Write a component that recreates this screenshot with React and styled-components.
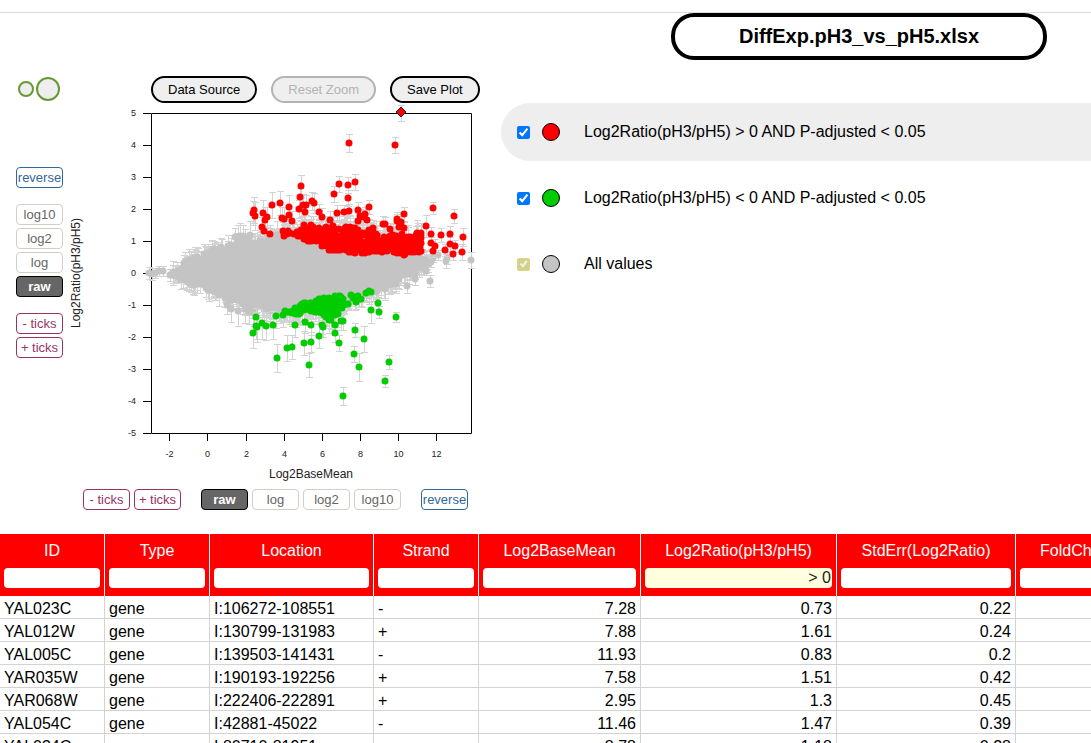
import React from "react";
import styled, { createGlobalStyle } from "styled-components";

const GlobalStyle = createGlobalStyle`
  *, *::before, *::after { box-sizing: border-box; }
  body {
    margin: 0;
    background: #fff;
    color: #000;
    font-family: Arial, "Liberation Sans", sans-serif;
    font-size: 16px;
  }
  button, input { font-family: inherit; }
`;

const Page = styled.div`
  display: flex;
  flex-direction: column;
  height: 100vh;
  overflow: hidden;
`;

const TopRule = styled.div`
  flex: none;
  height: 13px;
  border-bottom: 1px solid #ddd;
`;

const Workspace = styled.main`
  flex: none;
  display: flex;
`;

const PlotPanel = styled.section`
  flex: none;
  display: flex;
  gap: 3px;
  padding: 63px 20px 24px 16px;
`;

const ScaleColumn = styled.div`
  display: flex;
  flex-direction: column;
  gap: 16px;
`;

const SizeButton = styled.button`
  display: block;
  width: 47px;
  height: 26px;
  margin-bottom: 49px;
  padding: 0;
  border: 0;
  background: none;
`;

const ScaleGroup = styled.div`
  display: flex;
  flex-direction: ${(p) => (p.$row ? "row" : "column")};
  gap: ${(p) => (p.$row ? "4px" : "3px")};
`;

const tones = {
  reverse: "color: #369; border-color: #369; background: #fff;",
  ticks: "color: #936; border-color: #936; background: #fff;",
  plain: "color: #666; border-color: #d3cec6; background: #fff;",
  active: "color: #fff; border-color: #000; background: #666; font-weight: bold;",
};

const ScaleButton = styled.button`
  width: 47px;
  height: 21px;
  padding: 0;
  border: 1px solid;
  border-radius: 4px;
  font-size: 13px;
  line-height: 19px;
  white-space: nowrap;
  ${(p) => tones[p.$tone]}
`;

const PlotColumn = styled.div`
  display: flex;
  flex-direction: column;
`;

const Toolbar = styled.div`
  display: flex;
  gap: 14px;
  margin: 0 0 1px 85px;
`;

const ToolButton = styled.button`
  height: 27px;
  padding: 0 15px;
  border: 2px solid #000;
  border-radius: 14px;
  background: #efefef;
  color: #000;
  font-size: 13px;
  white-space: nowrap;
  &:disabled {
    border-color: #b3b3b3;
    color: #b3b3b3;
  }
`;

const Chart = styled.svg`
  display: block;
  width: 415px;
  height: 380px;
`;

const TickLabel = styled.text`
  font-size: 9px;
  fill: #222;
`;

const AxisTitle = styled.text`
  font-size: 12px;
  fill: #222;
  text-anchor: middle;
`;

const XControls = styled.div`
  display: flex;
  gap: 20px;
  margin: 5px 0 0 17px;
`;

const LegendPanel = styled.section`
  flex: 1;
  min-width: 0;
`;

const Title = styled.h1`
  width: 376px;
  margin: 0 0 43px 170px;
  padding: 8px 0;
  border: 4px solid #000;
  border-radius: 23px;
  font-size: 20px;
  line-height: 23px;
  text-align: center;
`;

const Legend = styled.div`
  display: flex;
  flex-direction: column;
  gap: 8px;
`;

const LegendRow = styled.label`
  display: flex;
  align-items: center;
  height: 58px;
  padding-left: 16px;
  border-radius: 29px 0 0 29px;
  background: ${(p) => (p.$selected ? "#eee" : "transparent")};
  white-space: nowrap;
`;

const Check = styled.input`
  flex: none;
  width: 13px;
  height: 13px;
  margin: 0 12px 0 0;
  &:disabled {
    appearance: none;
    display: grid;
    place-items: center;
    border: 1px solid #dcd97a;
    border-radius: 2px;
    background: #d3d18f;
  }
  &:disabled::before {
    content: "";
    width: 9px;
    height: 8px;
    background: #f4f3e2;
    clip-path: polygon(8% 50%, 24% 36%, 40% 56%, 78% 4%, 96% 18%, 44% 96%);
  }
`;

const Swatch = styled.span`
  flex: none;
  width: 18px;
  height: 18px;
  margin-right: 24px;
  border: 1px solid #000;
  border-radius: 50%;
  background: ${(p) => p.$color};
`;

const TableWrap = styled.div`
  flex: 1;
  min-height: 0;
  overflow: hidden;
`;

const Table = styled.table`
  table-layout: fixed;
  width: 1226px;
  border-collapse: separate;
  border-spacing: 0;
`;

const Col = styled.col`
  width: ${(p) => p.$width}px;
`;

const HeadCell = styled.th`
  height: 62px;
  padding: 7px 4px 8px;
  border-right: 1px solid #fff;
  background: #f00;
  color: #fff;
  font-weight: normal;
  line-height: 20px;
  vertical-align: top;
`;

const FilterInput = styled.input`
  display: block;
  width: 100%;
  height: 20px;
  margin-top: 7px;
  padding: 0 1px;
  border: 0;
  border-radius: 4px;
  background: ${(p) => (p.$filled ? "#ffffe0" : "#fff")};
  color: #222;
  font-size: 16px;
  line-height: 20px;
  text-align: ${(p) => (p.$numeric ? "right" : "left")};
`;

const Cell = styled.td`
  height: 23px;
  padding: 4px 4px 0;
  border-right: 1px solid #d3d3d3;
  border-bottom: 1px solid #d3d3d3;
  line-height: 18px;
  white-space: nowrap;
  text-align: ${(p) => (p.$numeric ? "right" : "left")};
`;

/* ---------- scatter plot ---------- */

const GREY = "#c4c4c4";
const RED = "#f00";
const GREEN = "#0c0";

function makeRandom(seed) {
  let a = seed;
  return () => {
    a = (a + 0x6d2b79f5) | 0;
    let t = Math.imul(a ^ (a >>> 15), 1 | a);
    t = (t + Math.imul(t ^ (t >>> 7), 61 | t)) ^ t;
    return ((t ^ (t >>> 14)) >>> 0) / 4294967296;
  };
}

function edgeAt(edge, x) {
  for (let i = 1; i < edge.length; i++) {
    const [x0, y0] = edge[i - 1];
    const [x1, y1] = edge[i];
    if (x <= x1) return y0 + ((y1 - y0) * (x - x0)) / (x1 - x0);
  }
  return edge[edge.length - 1][1];
}

function cloud(top, bottom, count, seed) {
  const random = makeRandom(seed);
  const left = top[0][0];
  const right = top[top.length - 1][0];
  const heights = [];
  let total = 0;
  for (let x = left; x <= right; x++) {
    total += Math.max(1, edgeAt(bottom, x) - edgeAt(top, x));
    heights.push(total);
  }
  return Array.from({ length: count }, () => {
    const pick = random() * total;
    const x = left + heights.findIndex((h) => h >= pick);
    const t = edgeAt(top, x);
    const b = edgeAt(bottom, x);
    return [x, Math.round(t + (b - t) * random())];
  });
}

const dots = (points) => points.map(([x, y]) => `M${x} ${y}h.01`).join("");

function bars(points, seed, low, spread) {
  const random = makeRandom(seed);
  return points
    .map(([x, y, size]) => {
      const h = size || Math.round(low + random() * spread);
      return `M${x - 3} ${y - h + 0.5}h7M${x + 0.5} ${y - h}v${2 * h}M${x - 3} ${y + h + 0.5}h7`;
    })
    .join("");
}

const greyTop = [[173, 272], [178, 267], [187, 262], [200, 256], [215, 249], [225, 247], [240, 243], [262, 240], [280, 236], [300, 234], [360, 236], [400, 248], [420, 258], [428, 262]];
const greyBottom = [[173, 276], [178, 278], [187, 282], [200, 287], [215, 292], [225, 298], [240, 302], [255, 307], [275, 311], [310, 313], [340, 305], [360, 298], [380, 292], [395, 281], [408, 274], [420, 266], [428, 263]];
const shift = (edge, dy) => edge.map(([x, y]) => [x, y + dy]);
const rimTop = cloud(shift(greyTop, -1), shift(greyTop, 4), 200, 11);
const rimBottom = cloud(shift(greyBottom, -4), shift(greyBottom, 1), 200, 29);
const greyFew = [
  [149, 273, 6], [152, 274, 6], [155, 273, 5], [159, 271, 5], [163, 271, 5], [170, 275, 6], [227, 305, 9], [231, 309, 13], [238, 311, 15], [245, 309, 14], [249, 312, 12], [254, 312, 14],
  [235, 237, 9], [240, 236, 13], [250, 235, 14], [262, 239, 11], [277, 235, 14], [245, 238, 9], [238, 238, 13], [243, 236, 11],
  [396, 284, 9], [407, 286, 7], [430, 281, 6], [415, 279, 6], [426, 271, 4], [421, 268, 6], [431, 262, 5], [426, 264, 5],
  [438, 255, 5], [446, 261, 7], [447, 258, 6], [471, 260, 8], [415, 274, 5], [433, 258, 4],
];
const greyOutline = [...greyTop, ...[...greyBottom].reverse()].map((p) => p.join(",")).join(" ");

const redTop = [[283, 233], [298, 232], [302, 227], [315, 226], [322, 229], [330, 224], [340, 228], [353, 226], [362, 231], [373, 230], [379, 237], [388, 236], [398, 234], [408, 233], [414, 230], [421, 233]];
const redBottom = [[283, 234], [297, 236], [303, 240], [320, 245], [328, 250], [343, 252], [360, 254], [373, 252], [382, 253], [395, 253], [402, 256], [411, 253], [421, 253]];
const redFew = [
  [301, 186, 11], [300, 197, 9], [299, 209, 9], [303, 205, 11], [306, 205, 10], [305, 212, 9], [312, 201, 9], [314, 203, 10], [319, 212, 8], [254, 210, 13],
  [253, 213, 12], [255, 216, 14], [263, 213, 13], [267, 217, 10], [265, 220, 13], [262, 227, 10], [264, 231, 9], [270, 234, 9], [272, 205, 13], [280, 203, 12],
  [289, 207, 12], [289, 215, 9], [282, 218, 11], [284, 219, 12], [292, 221, 10], [349, 143, 9], [395, 145, 8], [339, 184, 8], [348, 185, 8], [355, 182, 8],
  [334, 194, 8], [348, 198, 8], [322, 217, 9], [337, 213, 8], [344, 212, 7], [349, 211, 7], [358, 210, 8], [369, 207, 7], [365, 214, 7], [360, 216, 7],
  [363, 217, 7], [367, 220, 7], [358, 221, 8], [330, 220, 9], [383, 224, 8], [385, 224, 7], [390, 229, 6], [404, 214, 7], [397, 219, 7], [397, 221, 7],
  [401, 222, 6], [399, 227, 6], [404, 228, 6], [433, 208, 6], [454, 216, 7], [426, 226, 11], [431, 234, 7], [441, 235, 7], [450, 234, 8], [463, 237, 9],
  [431, 243, 6], [435, 246, 7], [433, 251, 6], [445, 250, 6], [450, 244, 7], [455, 246, 6], [453, 254, 6], [462, 252, 8],
  [283, 231, 9], [288, 231, 8], [284, 236, 8], [373, 228, 8], [304, 225, 10], [311, 225, 9],
];

const greenTop = [[276, 312], [283, 311], [290, 310], [298, 306], [305, 302], [315, 300], [320, 298], [333, 296], [341, 295], [344, 299]];
const greenBottom = [[276, 313], [290, 312], [295, 316], [305, 311], [315, 313], [322, 314], [328, 321], [335, 322], [340, 311], [344, 305]];
const greenFew = [
  [256, 317, 9], [262, 323, 16], [256, 326, 13], [257, 327, 15], [266, 326, 14], [273, 325, 14], [253, 333, 15], [295, 325, 12], [305, 322, 11], [311, 325, 10],
  [287, 348, 13], [292, 347, 12], [304, 343, 12], [311, 342, 10], [277, 358, 14], [309, 365, 12], [319, 336, 12], [335, 333, 9], [339, 343, 8], [355, 330, 7],
  [364, 339, 13], [354, 354, 8], [359, 367, 14], [389, 362, 7], [385, 381, 6], [343, 396, 9], [396, 317, 5], [379, 312, 6], [371, 310, 13], [378, 303, 6],
  [371, 292, 4], [369, 291, 4], [366, 293, 4], [348, 304, 6], [351, 295, 5], [353, 298, 5], [355, 297, 5], [358, 296, 6], [361, 299, 7], [356, 302, 7],
  [341, 321, 9], [343, 321, 9], [322, 325, 9], [323, 327, 10], [335, 325, 9], [276, 316, 12], [283, 315, 12],
];

const redCloud = cloud(redTop, redBottom, 420, 5);
const greenCloud = cloud(greenTop, greenBottom, 160, 17);

const xTicks = [[-2, 169], [0, 207], [2, 246], [4, 284], [6, 322], [8, 360], [10, 398], [12, 436]];
const yTicks = [5, 4, 3, 2, 1, 0, -1, -2, -3, -4, -5];

function ScatterPlot() {
  const frame = [
    "M151.5 433.5V113.5H471.5V433.5H151.5",
    ...xTicks.map(([, x]) => `M${x + 0.5} 433v8`),
    ...yTicks.map((v) => `M143 ${273.5 - 32 * v}h8`),
  ].join("");
  return (
    <Chart viewBox="66 104 415 380" role="img" aria-label="Log2Ratio(pH3/pH5) against Log2BaseMean">
      <path d={frame} fill="none" stroke="#000" />
      {xTicks.map(([v, x]) => (
        <TickLabel key={v} x={x + 0.5} y="457" textAnchor="middle">{v}</TickLabel>
      ))}
      {yTicks.map((v) => (
        <TickLabel key={v} x="136" y={276 - 32 * v} textAnchor="end">{v}</TickLabel>
      ))}
      <AxisTitle x="311" y="478">Log2BaseMean</AxisTitle>
      <AxisTitle transform="translate(80 273) rotate(-90)">Log2Ratio(pH3/pH5)</AxisTitle>
      <g fill="none" stroke="#d3d3d3">
        <path d={bars(rimTop, 3, 6, 5)} />
        <path d={bars(rimBottom, 7, 6, 5)} />
        <path d={bars(greyFew, 9, 6, 5)} />
      </g>
      <g fill="none" stroke={GREY} strokeWidth="7" strokeLinecap="round">
        <path d={dots(rimTop)} />
        <path d={dots(rimBottom)} />
        <path d={dots(greyFew)} />
      </g>
      <g fill="none" stroke="#d3d3d3">
        <path d={bars(redCloud.filter(([x, y]) => y < edgeAt(redTop, x) + 5), 13, 7, 6)} />
        <path d={bars(greenCloud.filter(([x, y]) => y > edgeAt(greenBottom, x) - 4), 21, 7, 7)} />
        <path d={bars(redFew, 1, 8, 4)} />
        <path d={bars(greenFew, 2, 8, 4)} />
        <path d="M398 105.5h7M401.5 105v16M398 121.5h7" />
      </g>
      <polygon points={greyOutline} fill={GREY} />
      <path d={dots([...redCloud, ...redFew])} stroke={RED} strokeWidth="7" strokeLinecap="round" />
      <path d={dots([...greenCloud, ...greenFew])} stroke={GREEN} strokeWidth="7" strokeLinecap="round" />
      <path d="M401 107l5 5-5 5-5-5z" fill={RED} stroke="#222" />
    </Chart>
  );
}

/* ---------- data ---------- */

const columns = [
  { name: "ID", width: 105 },
  { name: "Type", width: 105 },
  { name: "Location", width: 164 },
  { name: "Strand", width: 105 },
  { name: "Log2BaseMean", width: 162, numeric: true },
  { name: "Log2Ratio(pH3/pH5)", width: 196, numeric: true, filter: "> 0" },
  { name: "StdErr(Log2Ratio)", width: 179, numeric: true },
  { name: "FoldChange(pH3/pH5)", width: 210, numeric: true },
];

const rows = [
  ["YAL023C", "gene", "I:106272-108551", "-", "7.28", "0.73", "0.22", "1.66"],
  ["YAL012W", "gene", "I:130799-131983", "+", "7.88", "1.61", "0.24", "3.05"],
  ["YAL005C", "gene", "I:139503-141431", "-", "11.93", "0.83", "0.2", "1.78"],
  ["YAR035W", "gene", "I:190193-192256", "+", "7.58", "1.51", "0.42", "2.85"],
  ["YAR068W", "gene", "I:222406-222891", "+", "2.95", "1.3", "0.45", "2.46"],
  ["YAL054C", "gene", "I:42881-45022", "-", "11.46", "1.47", "0.39", "2.77"],
  ["YAL034C", "gene", "I:80710-81951", "-", "8.78", "1.18", "0.28", "2.27"],
];

const legend = [
  { text: "Log2Ratio(pH3/pH5) > 0 AND P-adjusted < 0.05", color: RED, selected: true },
  { text: "Log2Ratio(pH3/pH5) < 0 AND P-adjusted < 0.05", color: GREEN },
  { text: "All values", color: GREY, disabled: true },
];

export default function App() {
  return (
    <Page>
      <GlobalStyle />
      <TopRule />
      <Workspace>
        <PlotPanel>
          <ScaleColumn>
            <SizeButton aria-label="Point size">
              <svg width="47" height="26" fill="#eee" stroke="#693" strokeWidth="2">
                <circle cx="10" cy="13" r="7" />
                <circle cx="32" cy="13" r="11" />
              </svg>
            </SizeButton>
            <ScaleButton $tone="reverse">reverse</ScaleButton>
            <ScaleGroup>
              <ScaleButton $tone="plain">log10</ScaleButton>
              <ScaleButton $tone="plain">log2</ScaleButton>
              <ScaleButton $tone="plain">log</ScaleButton>
              <ScaleButton $tone="active">raw</ScaleButton>
            </ScaleGroup>
            <ScaleGroup>
              <ScaleButton $tone="ticks">- ticks</ScaleButton>
              <ScaleButton $tone="ticks">+ ticks</ScaleButton>
            </ScaleGroup>
          </ScaleColumn>
          <PlotColumn>
            <Toolbar>
              <ToolButton>Data Source</ToolButton>
              <ToolButton disabled>Reset Zoom</ToolButton>
              <ToolButton>Save Plot</ToolButton>
            </Toolbar>
            <ScatterPlot />
            <XControls>
              <ScaleGroup $row>
                <ScaleButton $tone="ticks">- ticks</ScaleButton>
                <ScaleButton $tone="ticks">+ ticks</ScaleButton>
              </ScaleGroup>
              <ScaleGroup $row>
                <ScaleButton $tone="active">raw</ScaleButton>
                <ScaleButton $tone="plain">log</ScaleButton>
                <ScaleButton $tone="plain">log2</ScaleButton>
                <ScaleButton $tone="plain">log10</ScaleButton>
              </ScaleGroup>
              <ScaleButton $tone="reverse">reverse</ScaleButton>
            </XControls>
          </PlotColumn>
        </PlotPanel>
        <LegendPanel>
          <Title>DiffExp.pH3_vs_pH5.xlsx</Title>
          <Legend>
            {legend.map((item) => (
              <LegendRow key={item.text} $selected={item.selected}>
                <Check type="checkbox" defaultChecked disabled={item.disabled} />
                <Swatch $color={item.color} />
                {item.text}
              </LegendRow>
            ))}
          </Legend>
        </LegendPanel>
      </Workspace>
      <TableWrap>
        <Table>
          <colgroup>
            {columns.map((c) => <Col key={c.name} $width={c.width} />)}
          </colgroup>
          <thead>
            <tr>
              {columns.map((c) => (
                <HeadCell key={c.name} scope="col">
                  {c.name}
                  <FilterInput
                    type="text"
                    aria-label={`Filter ${c.name}`}
                    defaultValue={c.filter}
                    $filled={Boolean(c.filter)}
                    $numeric={c.numeric}
                  />
                </HeadCell>
              ))}
            </tr>
          </thead>
          <tbody>
            {rows.map((row) => (
              <tr key={row[0]}>
                {row.map((value, i) => (
                  <Cell key={columns[i].name} $numeric={columns[i].numeric}>{value}</Cell>
                ))}
              </tr>
            ))}
          </tbody>
        </Table>
      </TableWrap>
    </Page>
  );
}
